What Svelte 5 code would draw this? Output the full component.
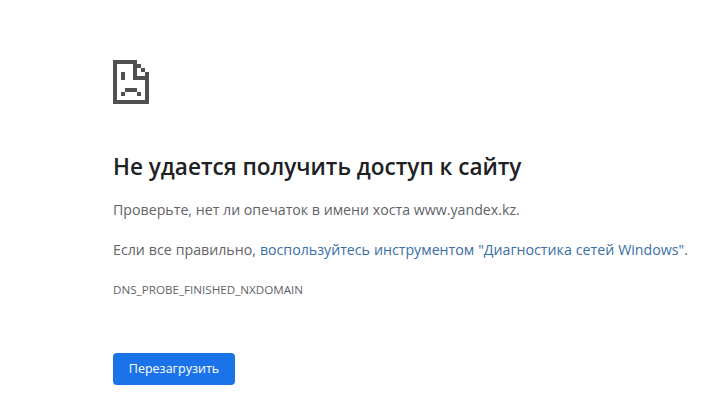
<script>
  const pixels = [
    [0,0,24,4],[0,4,4,36],[0,40,36,4],[32,20,4,20],
    [24,4,4,4],[28,8,4,4],[32,12,4,4],
    [20,4,4,16],[20,16,16,4],
    [8,12,4,8],
    [8,32,4,4],[12,28,12,4],[24,32,4,4]
  ];
</script>

<main class="page">
  <svg class="icon" width="36" height="44" viewBox="0 0 36 44" aria-hidden="true">
    {#each pixels as [x, y, w, h]}
      <rect {x} {y} width={w} height={h} fill="#505050" />
    {/each}
  </svg>
  <h1>Не удается получить доступ к сайту</h1>
  <p class="first">Проверьте, нет ли опечаток в имени хоста www.yandex.kz.</p>
  <p class="second">Если все правильно, <a href="#diag">воспользуйтесь инструментом "Диагностика сетей Windows"</a>.</p>
  <div class="code">DNS_PROBE_FINISHED_NXDOMAIN</div>
  <button type="button">Перезагрузить</button>
</main>

<style>
  :global(body) {
    margin: 0;
    background: #fff;
  }
  .page {
    display: flex;
    flex-direction: column;
    align-items: flex-start;
    padding: 60px 0 0 113px;
    height: 345px;
    overflow: hidden;
    font-family: "Open Sans", "Noto Sans", sans-serif;
    color: #5f6368;
  }
  .icon {
    display: block;
  }
  h1 {
    margin: 46px 0 0;
    font-size: 22.55px;
    line-height: 34px;
    font-weight: 600;
    color: #202124;
    white-space: nowrap;
  }
  p {
    margin: 0;
    font-size: 14.2px;
    line-height: 20px;
    white-space: nowrap;
  }
  .first {
    margin-top: 16px;
  }
  .second {
    margin-top: 20px;
    word-spacing: 0.3px;
  }
  a {
    color: #3a6ea5;
    text-decoration: none;
  }
  .code {
    margin-top: 22px;
    font-size: 11.65px;
    line-height: 16px;
    color: #5f6368;
  }
  button {
    margin-top: 55px;
    width: 122px;
    height: 32px;
    border: 0;
    border-radius: 4px;
    background: #1a73e8;
    color: #fff;
    font: 500 12.5px/32px "Open Sans", sans-serif;
    padding: 0;
  }
</style>
